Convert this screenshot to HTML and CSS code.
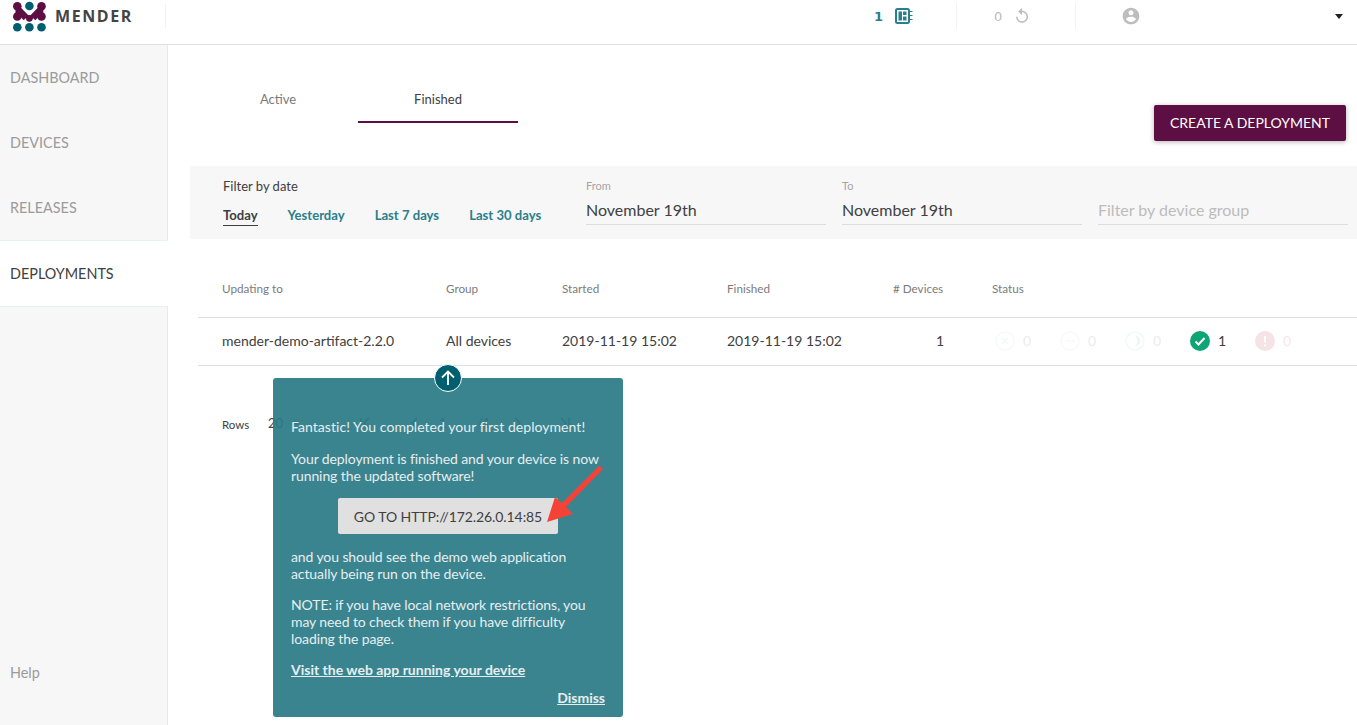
FILE: index.html
```html
<!DOCTYPE html>
<html lang="en">
<head>
<meta charset="utf-8">
<title>Mender deployments</title>
<link rel="stylesheet" href="styles.css">
</head>
<body>
<header class="topbar">
  <div class="brand">
    <svg class="logo" width="33" height="31" viewBox="0 0 33 31">
      <path d="M4.300 5.500V15.500M28.500 5.500V15.500M4.300 5.500L16.400 18L28.500 5.500M4.300 10L12 18M28.500 10L21 18" stroke="#5d0f43" stroke-width="3.600" fill="none"/>
      <g fill="#5d0f43">
        <circle cx="4.300" cy="5.300" r="4.300"/><circle cx="28.500" cy="5.300" r="4.300"/>
        <circle cx="4.300" cy="15.500" r="4.300"/><circle cx="28.500" cy="15.500" r="4.300"/>
        <circle cx="16.400" cy="17.300" r="3.400"/>
      </g>
      <g fill="#005f6e">
        <circle cx="16.400" cy="5" r="4.300"/>
        <circle cx="4.300" cy="26.300" r="4.300"/><circle cx="16.400" cy="26.300" r="4.300"/><circle cx="28.500" cy="26.300" r="4.300"/>
      </g>
    </svg>
    <span class="wordmark">MENDER</span>
  </div>
  <div class="spacer"></div>
  <div class="stat stat-devices">
    <span class="stat-num">1</span>
    <svg width="18" height="16" viewBox="0 0 18 16"><rect x="1" y="1" width="13" height="14" rx="1.500" fill="none" stroke="#2a7f8c" stroke-width="2"/><path d="M3.500 3.500h3.500v9H3.500zM8 3.500h3.500v3.500H8zM8 8.500h3.500v4H8z" fill="#2a7f8c"/><path d="M15 3.500h2.500M15 7.500h2.500M15 11.500h2.500" stroke="#2a7f8c" stroke-width="1"/></svg>
  </div>
  <div class="stat stat-deploys">
    <span class="stat-num-muted">0</span>
    <svg width="16" height="16" viewBox="0 0 24 24"><path d="M12 5V1L7 6l5 5V7c3.310 0 6 2.690 6 6s-2.690 6-6 6-6-2.690-6-6H4c0 4.420 3.580 8 8 8s8-3.580 8-8-3.580-8-8-8z" fill="#bdbdbd" transform="translate(-1.500 -1.500) scale(1.130)"/></svg>
  </div>
  <div class="stat-user">
    <svg width="20" height="20" viewBox="0 0 24 24"><path d="M12 2C6.480 2 2 6.480 2 12s4.480 10 10 10 10-4.480 10-10S17.520 2 12 2zm0 3c1.660 0 3 1.340 3 3s-1.340 3-3 3-3-1.340-3-3 1.340-3 3-3zm0 14.200c-2.500 0-4.710-1.280-6-3.220.03-1.990 4-3.080 6-3.080 1.990 0 5.970 1.090 6 3.080-1.290 1.940-3.500 3.220-6 3.220z" fill="#bdbdbd"/></svg>
    <span class="caret"></span>
  </div>
</header>
<div class="body">
  <nav class="sidebar">
    <a class="nav-item">DASHBOARD</a>
    <a class="nav-item">DEVICES</a>
    <a class="nav-item">RELEASES</a>
    <a class="nav-item nav-active">DEPLOYMENTS</a>
    <a class="nav-help">Help</a>
  </nav>
  <main class="content">
    <div class="tabs-row">
      <div class="tabs">
        <div class="tab">Active</div>
        <div class="tab tab-on">Finished</div>
      </div>
      <button class="create">CREATE A DEPLOYMENT</button>
    </div>
    <section class="filters">
      <div class="filter-dates">
        <div class="filter-label">Filter by date</div>
        <div class="quick">
          <span class="quick-on">Today</span><span>Yesterday</span><span>Last 7 days</span><span>Last 30 days</span>
        </div>
      </div>
      <div class="field field-from"><label>From</label><div class="value">November 19th</div></div>
      <div class="field field-to"><label>To</label><div class="value">November 19th</div></div>
      <div class="field field-group"><label>&nbsp;</label><div class="value placeholder">Filter by device group</div></div>
    </section>
    <section class="table">
      <div class="row row-head">
        <div class="c1">Updating to</div><div class="c2">Group</div><div class="c3">Started</div><div class="c4">Finished</div><div class="c5"># Devices</div><div class="c6">Status</div>
      </div>
      <div class="row row-data">
        <div class="c1">mender-demo-artifact-2.2.0</div><div class="c2">All devices</div><div class="c3">2019-11-19 15:02</div><div class="c4">2019-11-19 15:02</div><div class="c5 num">1</div>
        <div class="c6 statuses">
          <span class="st st-off"><svg width="20" height="20" viewBox="0 0 20 20"><circle cx="10" cy="10" r="9" fill="none" stroke="#f7faf9" stroke-width="1.500"/><path d="M7 7l6 6M13 7l-6 6" stroke="#f5f7f7" stroke-width="1.500"/></svg>0</span>
          <span class="st st-off"><svg width="20" height="20" viewBox="0 0 20 20"><circle cx="10" cy="10" r="9" fill="none" stroke="#f7faf9" stroke-width="1.500"/><path d="M6 10h1.500M9.300 10h1.500M12.600 10h1.500" stroke="#f3f5f5" stroke-width="2"/></svg>0</span>
          <span class="st st-off"><svg width="20" height="20" viewBox="0 0 20 20"><circle cx="10" cy="10" r="9" fill="none" stroke="#f2f9f7" stroke-width="1.500"/><path d="M10 5a5 5 0 0 1 0 10a6 6 0 0 0 0-10z" fill="#ebf4f2"/></svg>0</span>
          <span class="st st-ok"><svg width="20" height="20" viewBox="0 0 20 20"><circle cx="10" cy="10" r="10" fill="#0da574"/><path d="M5.500 10.500l3 3 6-6.500" fill="none" stroke="#fff" stroke-width="2"/></svg>1</span>
          <span class="st st-err"><svg width="20" height="20" viewBox="0 0 20 20"><circle cx="10" cy="10" r="10" fill="#f5e3e6"/><path d="M10 5v6.500M10 13.500v2" stroke="#fff" stroke-width="2"/></svg>0</span>
        </div>
      </div>
    </section>
    <div class="pager">
      <span class="rows">Rows</span>
      <span class="rows-val">20</span>
      <span class="pg-caret"></span>
      <svg class="pg-first" width="11" height="12" viewBox="0 0 11 12"><path d="M1 1v10M9 1L4 6l5 5" fill="none" stroke="#555" stroke-width="1.300"/></svg>
      <svg class="pg-prev" width="8" height="12" viewBox="0 0 8 12"><path d="M7 1L2 6l5 5" fill="none" stroke="#555" stroke-width="1.300"/></svg>
      <span class="page-cur">1</span>
      <span class="page-of">/1</span>
      <svg class="pg-next" width="8" height="12" viewBox="0 0 8 12"><path d="M1 1l5 5-5 5" fill="none" stroke="#555" stroke-width="1.300"/></svg>
      <svg class="pg-last" width="11" height="12" viewBox="0 0 11 12"><path d="M10 1v10M2 1l5 5-5 5" fill="none" stroke="#555" stroke-width="1.300"/></svg>
    </div>
  </main>
</div>
<aside class="popup">
  <span class="popup-arrow"><svg width="20" height="20" viewBox="0 0 20 20"><path d="M10 17V4M4 9.500L10 3.500l6 6" fill="none" stroke="#fff" stroke-width="1.800"/></svg></span>
  <p class="lead">Fantastic! You completed your first deployment!</p>
  <p>Your deployment is finished and your device is now running the updated software!</p>
  <div class="popup-btn-wrap"><button class="go">GO TO HTTP://172.26.0.14:85</button></div>
  <p>and you should see the demo web application actually being run on the device.</p>
  <p>NOTE: if you have local network restrictions, you may need to check them if you have difficulty loading the page.</p>
  <p class="visit-line"><a class="visit">Visit the web app running your device</a></p>
  <div class="dismiss-row"><a class="dismiss">Dismiss</a></div>
</aside>
<svg class="red-arrow" width="62" height="66" viewBox="0 0 62 66"><path d="M58.500 2.500L62 6L25 44L32 51L6 59L14 34L21 40Z" fill="#f44336"/></svg>
</body>
</html>
```
FILE: styles.css
```css
* { box-sizing: border-box; }
html, body { margin: 0; height: 100%; overflow: hidden; }
body { font-family: Lato, sans-serif; color: #404041; background: #fff; font-size: 14px; }
.topbar { height: 45px; padding-top: 4px; border-bottom: 1px solid #e0e0e0; display: flex; align-items: flex-start; }
.brand { width: 166px; height: 24px; display: flex; align-items: center; padding-left: 13px; border-right: 1px solid #eef3f3; }
.logo { flex: none; }
.wordmark { margin-left: 9px; font-family: "Open Sans", sans-serif; font-weight: 700; font-size: 16px; letter-spacing: 1.6px; color: #444; }
.spacer { flex: 1; }
.stat { display: flex; align-items: center; height: 24px; }
.stat-devices { gap: 12px; width: 82px; color: #2a7f8c; font-weight: 700; }
.stat-devices .stat-num { font-family: "DejaVu Sans", sans-serif; font-size: 13px; margin-top: 1px; }
.stat-deploys { gap: 12px; width: 119px; padding-left: 37px; border-left: 1px solid #eef3f3; color: #bdbdbd; }
.stat-num-muted { font-family: "DejaVu Sans", sans-serif; font-size: 13px; margin-top: 1px; }
.stat-user { width: 282px; height: 24px; padding-left: 45px; padding-right: 14px; border-left: 1px solid #eef3f3; display: flex; align-items: center; justify-content: space-between; }
.caret { width: 0; height: 0; border-left: 4.500px solid transparent; border-right: 4.500px solid transparent; border-top: 5px solid #222; }
.body { display: flex; height: 680px; }
.sidebar { width: 168px; background: #f7f7f7; border-right: 1px solid #e8e8e8; display: flex; flex-direction: column; flex: none; }
.nav-item { height: 65px; display: flex; align-items: center; padding-left: 10px; font-size: 14.400px; color: #9b9b9b; }
.nav-active { height: 67px; background: #fff; color: #404041; border-top: 1px solid #e6f2f1; border-bottom: 1px solid #e6f2f1; margin-right: -1px; position: relative; }
.nav-help { margin-top: auto; padding: 0 0 44px 10px; font-size: 14.400px; color: #9b9b9b; }
.content { flex: 1; padding: 0 0 0 22px; min-width: 0; }
.tabs-row { display: flex; justify-content: space-between; height: 121px; padding-right: 11px; }
.tabs { display: flex; padding: 30px 0 0 8px; }
.tab { width: 160px; height: 48px; display: flex; align-items: center; justify-content: center; font-size: 13px; color: #7b7b7b; }
.tab-on { color: #404041; padding-top: 2px; border-bottom: 2px solid #5d0f43; }
.create { margin-top: 60px; width: 192px; height: 36px; padding-bottom: 2px; border: 0; border-radius: 2px; background: #5d0f43; color: #fff; font: 14px Lato, sans-serif; box-shadow: 0 1px 5px rgba(0,0,0,.3); }
.filters { height: 73px; background: #f7f7f7; display: flex; padding-left: 33px; }
.filter-dates { width: 363px; padding-top: 12px; }
.filter-label { font-size: 13px; color: #404041; }
.quick { display: flex; gap: 30px; margin-top: 13px; font-size: 13.100px; font-weight: 700; color: #2a7f8c; }
.quick span { height: 18px; }
.quick .quick-on { color: #404041; border-bottom: 1px solid #404041; height: 19px; }
.field { width: 240px; margin-right: 16px; padding-top: 13px; }
.field label { display: block; font-size: 11px; color: #a5a5a5; line-height: 14px; }
.value { height: 29px; margin-top: 3px; padding-top: 2px; border-bottom: 1px solid #dedede; font-size: 16px; line-height: 23px; color: #404041; }
.placeholder { color: #bcbcbc; }
.field-group { width: 250px; margin-right: 0; }
.table { margin: 0 0 0 8px; }
.row { display: flex; align-items: center; border-bottom: 1px solid #e0e0e0; }
.row-head { height: 79px; padding-top: 19px; font-size: 11.700px; color: #7b7b7b; }
.row-data { height: 48px; padding-bottom: 2px; font-size: 14px; color: #404041; }
.c1 { width: 248px; padding-left: 24px; }
.c2 { width: 116px; }
.c3 { width: 165px; }
.c4 { width: 166px; }
.c5 { width: 99px; }
.num { padding-left: 43px; }
.statuses { display: flex; padding-left: 3px; }
.st { display: inline-flex; align-items: center; gap: 8px; width: 65px; }
.st-off { color: #ececec; }
.st-ok { color: #404041; }
.st-err { color: #f9e6ea; }
.pager { display: flex; align-items: center; margin: 49px 0 0 32px; font-size: 11.500px; }
.rows { width: 46px; margin-top: 3px; }
.rows-val { font-size: 13px; width: 24px; }
.pg-caret { width: 0; height: 0; border-left: 4px solid transparent; border-right: 4px solid transparent; border-top: 4px solid #555; }
.pg-first { margin-left: 60px; }
.pg-prev { margin-left: 39px; }
.page-cur { font-size: 13px; margin-left: 21px; width: 38px; }
.page-of { font-size: 13px; width: 37px; }
.pg-last { margin-left: 37px; }
.popup { position: absolute; left: 273px; top: 378px; width: 350px; height: 339px; padding: 40px 18px 0; background: rgba(41,122,135,.92); border-radius: 3px; color: #e6eeef; font-size: 14px; line-height: 17px; }
.popup p { margin: 0 0 14px; letter-spacing: -0.1px; }
.popup .lead { margin-bottom: 15px; letter-spacing: 0.05px; }
.popup .visit-line { letter-spacing: 0; }
.popup-arrow { position: absolute; left: 161px; top: -14px; width: 28px; height: 28px; border-radius: 50%; background: #005f6e; border: 1px solid #fff; display: flex; align-items: center; justify-content: center; }
.popup-btn-wrap { display: flex; justify-content: center; margin: 1px 0 14px; }
.go { width: 220px; height: 36px; border: 0; border-radius: 2px; background: #e0e0e0; color: #404041; font: 14px Lato, sans-serif; letter-spacing: -0.08px; }
.visit { font-weight: 700; text-decoration: underline; }
.dismiss-row { text-align: right; margin-top: -3px; }
.dismiss { font-weight: 700; text-decoration: underline; }
.red-arrow { position: absolute; left: 541px; top: 463px; }
```
